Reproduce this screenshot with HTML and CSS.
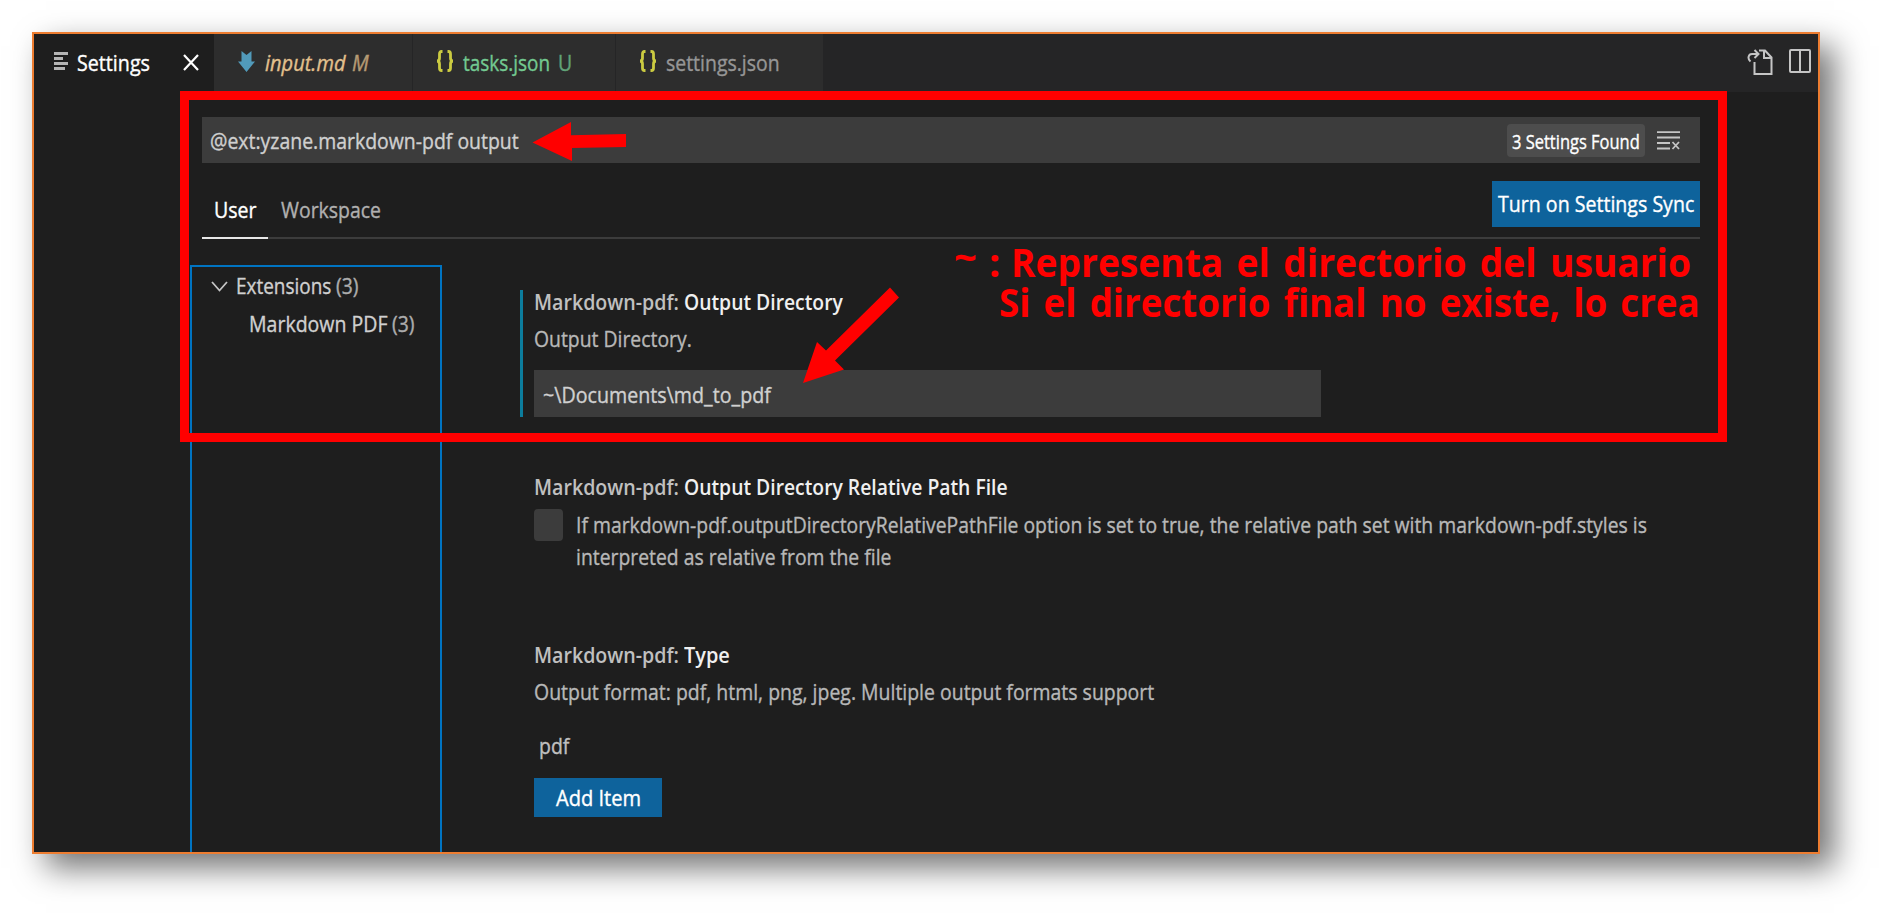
FILE: index.html
```html
<!DOCTYPE html>
<html lang="en">
<head>
<meta charset="utf-8">
<title>Settings</title>
<link rel="stylesheet" href="styles.css">
</head>
<body>
<div class="window">
  <div class="tabbar">
    <div class="tab active">
      <svg class="ic-settings" width="15" height="18" viewBox="0 0 15 18"><path d="M0 1.500h14M0 6.500h9M0 11.500h14M0 16.500h11" stroke="#b5b5b5" stroke-width="2.800" fill="none"/></svg>
      <span class="t f-settings">Settings</span>
      <svg class="ic-close" width="16" height="17" viewBox="0 0 16 17"><path d="M1 1l14 15M15 1L1 16" stroke="#fff" stroke-width="2.200" fill="none"/></svg>
    </div>
    <div class="tab t-input">
      <svg class="ic-md" width="17" height="21" viewBox="0 0 17 21"><path d="M3.500 0l5 4 5-4v10.500H17L8.500 21 0 10.500h3.500z" fill="#519aba"/></svg>
      <span class="t f-input">input.md</span><span class="t f-m">M</span>
    </div>
    <div class="tab t-tasks">
      <svg class="ic-br" width="18" height="22" viewBox="0 0 18 22"><path d="M6.500 1.500H5.500Q3.500 1.500 3.500 4V8Q3.500 11 1 11Q3.500 11 3.500 14V18Q3.500 20.500 5.500 20.500H6.500M11.500 1.500H12.500Q14.500 1.500 14.500 4V8Q14.500 11 17 11Q14.500 11 14.500 14V18Q14.500 20.500 12.500 20.500H11.500" stroke="#cbcb41" stroke-width="2.800" fill="none"/></svg>
      <span class="t f-tasks">tasks.json</span><span class="t f-u">U</span>
    </div>
    <div class="tab t-json">
      <svg class="ic-br" width="18" height="22" viewBox="0 0 18 22"><path d="M6.500 1.500H5.500Q3.500 1.500 3.500 4V8Q3.500 11 1 11Q3.500 11 3.500 14V18Q3.500 20.500 5.500 20.500H6.500M11.500 1.500H12.500Q14.500 1.500 14.500 4V8Q14.500 11 17 11Q14.500 11 14.500 14V18Q14.500 20.500 12.500 20.500H11.500" stroke="#cbcb41" stroke-width="2.800" fill="none"/></svg>
      <span class="t f-json">settings.json</span>
    </div>
    <div class="actions">
      <svg width="26" height="27" viewBox="0 0 26 27"><g fill="none" stroke="#c5c5c5" stroke-width="2"><path d="M7.500 13V25H24.500V8.500L18 1.500H12M17 1.500V9H24.500"/><path d="M3.500 12.500C0 9.500 1.500 5 5 5H11M7.500 1L11.500 5L7.500 9"/></g></svg>
      <svg width="22" height="24" viewBox="0 0 22 24"><path d="M2 1H20Q21 1 21 2V22Q21 23 20 23H2Q1 23 1 22V2Q1 1 2 1ZM11 1V23" fill="none" stroke="#c5c5c5" stroke-width="2"/></svg>
    </div>
  </div>
  <div class="editor">
    <div class="search">
      <span class="t f-query">@ext:yzane.markdown-pdf output</span>
      <div class="badge"><span class="t f-found">3 Settings Found</span></div>
      <svg class="ic-clear" width="24" height="19" viewBox="0 0 24 19"><path d="M0 1.200H23M0 6.500H23M0 12H13M0 17.500H13M15.500 11L22 18M22 11L15.500 18" stroke="#c5c5c5" stroke-width="1.800" fill="none"/></svg>
    </div>
    <div class="scopes">
      <div class="scope on"><span class="t f-user">User</span></div>
      <div class="scope"><span class="t f-ws">Workspace</span></div>
      <div class="sync"><span class="t f-sync">Turn on Settings Sync</span></div>
    </div>
    <div class="columns">
      <div class="toc">
        <div class="row r1"><svg width="17" height="11" viewBox="0 0 17 11"><path d="M1 1L8.500 9.500L16 1" stroke="#c5c5c5" stroke-width="1.800" fill="none"/></svg><span class="t f-ext">Extensions</span><span class="t n">(3)</span></div>
        <div class="row r2"><span class="t f-mdpdf">Markdown PDF</span><span class="t n">(3)</span></div>
      </div>
      <div class="items">
        <div class="item modified">
          <div class="head"><span class="t cat">Markdown-pdf:</span><span class="t f-head">Output Directory</span></div>
          <div class="desc"><span class="t f-desc">Output Directory.</span></div>
          <div class="field"><span class="t f-path">~\Documents\md_to_pdf</span></div>
        </div>
        <div class="item relative">
          <div class="head"><span class="t cat">Markdown-pdf:</span><span class="t f-head">Output Directory Relative Path File</span></div>
          <div class="check-row">
            <div class="check"></div>
            <div class="lines">
              <div><span class="t f-desc">If markdown-pdf.outputDirectoryRelativePathFile option is set to true, the relative path set with markdown-pdf.styles is</span></div>
              <div><span class="t f-desc">interpreted as relative from the file</span></div>
            </div>
          </div>
        </div>
        <div class="item type">
          <div class="head"><span class="t cat">Markdown-pdf:</span><span class="t f-type">Type</span></div>
          <div class="desc"><span class="t f-format">Output format: pdf, html, png, jpeg. Multiple output formats support</span></div>
          <div class="value"><span class="t f-pdf">pdf</span></div>
          <div class="add"><span class="t f-add">Add Item</span></div>
        </div>
      </div>
    </div>
  </div>
</div>
<div class="mark"></div>
<div class="note n0"><span class="tilde">~</span><span>:</span></div>
<div class="note n1"><span class="t f-n1">Representa el directorio del usuario</span></div>
<div class="note n2"><span class="t f-n2">Si el directorio final no existe, lo crea</span></div>
<svg class="arrows" width="1885" height="919" viewBox="0 0 1885 919"><path d="M532.500 142.500L571 122V135.300L626 134V147L572 148V161ZM803 383L817 342L826 350.500L890 287.500L899 297.500L835 360.500L844 369.500Z" fill="#f00"/></svg>
</body>
</html>
```
FILE: styles.css
```css
* { box-sizing: border-box; }
body { margin: 0; width: 1885px; height: 919px; padding: 32px; background: #fff; overflow: hidden; font: 21px "Open Sans", "Noto Sans", sans-serif; color: #d0d0d0; }

/* Condensed labels: taller than wide, scaled from their left edge */
.t { display: inline-block; white-space: nowrap; transform-origin: 0 60%; transform: scale(var(--s, .926), 1.06); -webkit-text-stroke: .35px currentColor; }

.window { width: 1788px; height: 822px; border: 2px solid #ed7d31; background: #1e1e1e; box-shadow: 14px 14px 30px rgba(0,0,0,.55); overflow: hidden; }

/* Tabs */
.tabbar { display: flex; height: 58px; background: #252526; line-height: 58px; }
.tab { display: flex; background: #2d2d2d; border-right: 1px solid #252526; }
.tab.active { width: 180px; background: #1e1e1e; border: 0; color: #fff; padding-left: 20px; }
.ic-settings { margin: 18px 8px 0 0; flex: none; }
.f-settings { --s: .937; width: 83px; flex: none; }
.ic-close { margin: 20px 0 0 23px; flex: none; }
.t-input { width: 199px; padding-left: 24px; color: #e2c08d; font-style: italic; }
.ic-md { margin: 17px 10px 0 0; flex: none; }
.f-input { --s: .955; width: 87px; flex: none; }
.f-m { --s: .95; opacity: .75; }
.t-tasks { width: 203px; padding-left: 23px; color: #73c991; }
.ic-br { margin: 16px 9px 0 0; flex: none; }
.f-tasks { --s: .901; width: 95px; flex: none; }
.f-u { opacity: .75; }
.t-json { width: 208px; padding-left: 23px; color: #969696; }
.actions { margin-left: auto; display: flex; gap: 16px; padding: 15px 7px 0 0; }

/* Search and scope row */
.editor { padding: 25px 0 0 156px; }
.search { display: flex; width: 1498px; height: 46px; margin-left: 12px; background: #3c3c3c; padding-left: 8px; line-height: 48px; }
.badge { margin: 7px 12px 0 auto; width: 138px; height: 33px; border-radius: 4px; background: #4d4d4d; color: #fff; line-height: 35px; padding-left: 5px; font-size: 19.500px; }
.f-found { --s: .845; }
.badge .t, .sync .t, .add .t { display: block; width: 0; }
.ic-clear { margin: 14px 19px 0 0; }
.scopes { display: flex; width: 1498px; height: 76px; margin-left: 12px; border-bottom: 2px solid #3c3c3c; }
.scope { height: 76px; padding-top: 32px; line-height: 31px; width: 110px; color: #b0b0b0; }
.scope.on { width: 66px; padding-left: 12px; margin-right: 13px; border-bottom: 2px solid #e7e7e7; color: #fff; }
.f-user { --s: .93; }
.sync { margin: 17.500px 0 0 auto; width: 208px; height: 46px; background: #0e639c; color: #fff; line-height: 47px; padding-left: 6px; }
.f-sync { --s: .932; }

/* Table of contents */
.columns { display: flex; }
.toc { width: 252px; height: 620px; margin-top: 26px; border: 2px solid #0074c2; }
.row { display: flex; }
.r1 { line-height: 38px; height: 37px; padding-left: 19px; }
.r1 svg { margin: 14px 8px 0 0; flex: none; }
.r2 { line-height: 41px; padding-left: 57px; }
.f-ext { --s: .902; width: 100px; flex: none; }
.f-mdpdf { --s: .93; width: 143px; flex: none; }
.n { --s: .92; opacity: .8; }

/* Settings list */
.items { padding: 51px 0 0 78px; width: 1300px; }
.item { padding-left: 14px; }
.modified { border-left: 3px solid #0c7d9d; padding-left: 11px; height: 127px; }
.head { display: flex; line-height: 24px; font-weight: 600; color: #f0f0f0; }
.head .t { -webkit-text-stroke: 0; }
.cat { --s: .934; width: 150px; flex: none; color: #c0c0c0; }
.f-head { --s: .92; }
.f-type { --s: .95; }
.desc { line-height: 50px; height: 49px; color: #b8b8b8; }
.f-desc { --s: .922; }
.field { margin-top: 6.500px; width: 787px; height: 47.500px; background: #3c3c3c; line-height: 50px; padding-left: 9px; }
.f-path { --s: .936; }
.relative { margin-top: 58px; height: 168px; }
.check-row { display: flex; margin-top: 9px; color: #b8b8b8; }
.check { width: 29px; height: 32px; margin: 1px 13px 0 0; border-radius: 4px; background: #3c3c3c; flex: none; }
.lines { line-height: 32px; padding-top: .5px; }
.value { line-height: 30px; margin-top: 15px; padding-left: 5px; color: #c0c0c0; }
.add { margin-top: 17px; width: 128px; height: 39px; background: #0e639c; color: #fff; line-height: 40px; padding-left: 22px; }
.f-add { --s: .955; }

/* Annotations drawn over the window */
.mark { position: absolute; left: 180px; top: 91px; width: 1547px; height: 351px; border: 9px solid #f00; }
.note { position: absolute; color: #f00; font-weight: 700; font-size: 40px; line-height: 40px; }
.note .t { -webkit-text-stroke: 0; transform: scaleX(var(--s)); }
.n0 { left: 954px; top: 242px; display: flex; gap: 12px; }
.tilde { position: relative; top: -5px; }
.n1 { left: 1011px; top: 242px; word-spacing: 4px; }
.n2 { left: 999px; top: 282px; word-spacing: 4px; }
.f-n1 { --s: .929; }
.f-n2 { --s: .917; }
.arrows { position: absolute; left: 0; top: 0; }
```
